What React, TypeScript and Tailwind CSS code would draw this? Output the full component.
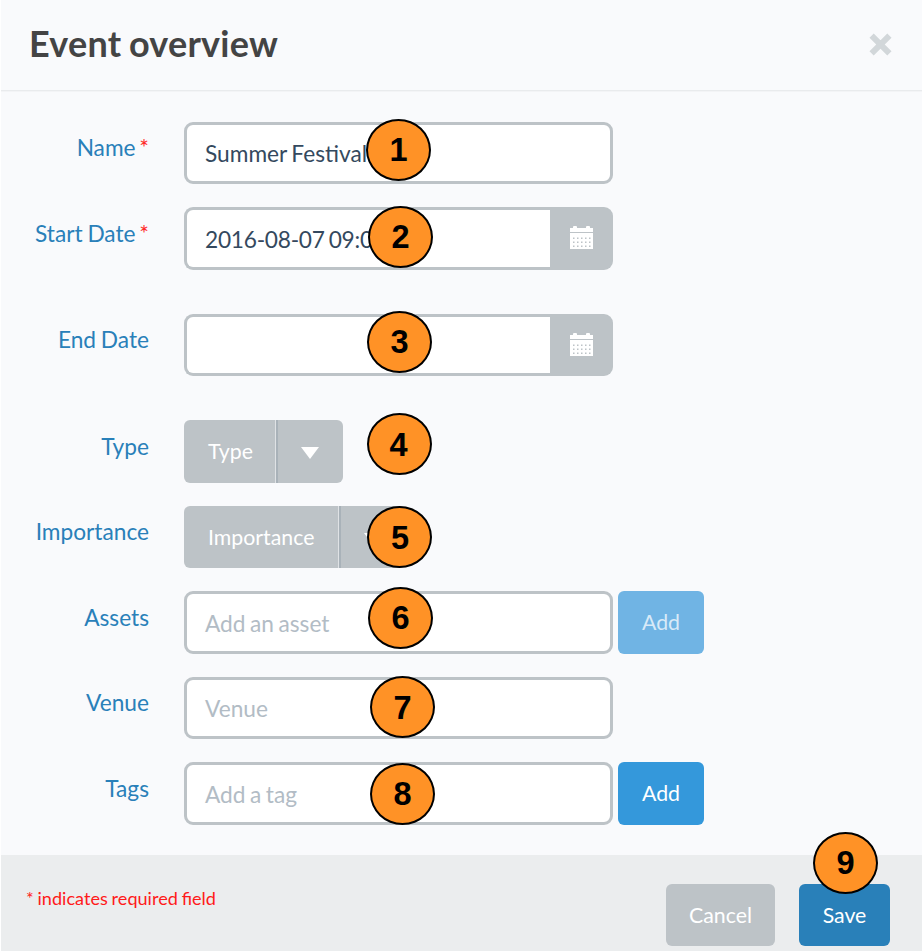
import type { ReactNode } from "react";

function Marker({ n, place, nudge = "" }: { n: number; place: string; nudge?: string }) {
  return (
    <div
      className={`absolute flex h-[62px] w-[65px] items-center justify-center rounded-[50%] border-2 border-black bg-[#ff9226] ${place}`}
    >
      <span className={`font-['Liberation_Sans',Arial,sans-serif] text-[32.5px] leading-none font-bold text-black ${nudge}`}>
        {n}
      </span>
    </div>
  );
}

function Row({
  label,
  required = false,
  box,
  drop = "pt-[9px]",
  children,
}: {
  label: string;
  required?: boolean;
  box: string;
  drop?: string;
  children: ReactNode;
}) {
  return (
    <div className={`flex shrink-0 ${box}`}>
      <div
        className={`mr-[35px] w-[149px] shrink-0 text-right text-[22.7px] leading-[34px] [word-spacing:-1px] whitespace-nowrap text-[#2980b9] ${drop}`}
      >
        {label}
        {required && <span className="text-[#ff2a2a] [word-spacing:-2px]"> *</span>}
      </div>
      {children}
    </div>
  );
}

function Field({ value, placeholder, drop = "pt-[2px]" }: { value?: string; placeholder?: string; drop?: string }) {
  return (
    <div
      className={`flex h-full w-[429px] shrink-0 items-center rounded-[9px] border-3 border-[#bdc3c7] bg-white px-[18px] text-[22.7px] [word-spacing:-1.3px] whitespace-nowrap ${drop} ${value ? "text-[#34495e]" : "text-[#b2bcc5]"}`}
    >
      {value ?? placeholder}
    </div>
  );
}

function CalendarIcon() {
  const dots = [3, 7, 11, 15, 19];
  return (
    <svg width="23" height="23" viewBox="0 0 23 23" className="-mt-[2px] -ml-px">
      <path fill="#fff" d="M0 2h3V1q0-1 1-1h2q1 0 1 1v1h9V1q0-1 1-1h2q1 0 1 1v1h3v4H0zM0 7h23v16H0z" />
      {[12, 16, 20].map((y) =>
        dots.map((x) => <rect key={`${x}-${y}`} x={x} y={y - 0.5} width="1.5" height="1.5" fill="#bdc3c7" />),
      )}
    </svg>
  );
}

function DateField({ value }: { value?: string }) {
  return (
    <div className="flex h-full w-[429px] shrink-0">
      <div className="flex w-[366px] items-center rounded-l-[9px] border-3 border-r-0 border-[#bdc3c7] bg-white pt-[3px] pl-[18px] text-[22.7px] tracking-[-0.25px] [word-spacing:-1.5px] whitespace-nowrap text-[#34495e]">
        {value}
      </div>
      <div className="flex w-[63px] items-center justify-center rounded-r-[9px] bg-[#bdc3c7]">
        <CalendarIcon />
      </div>
    </div>
  );
}

function Dropdown({ text, width }: { text: string; width: string }) {
  return (
    <div className="flex h-full overflow-hidden rounded-md bg-[#bdc3c7] text-white">
      <div className={`flex items-center pt-px pl-[24px] text-[21.3px] ${width}`}>{text}</div>
      <div className="w-px bg-[#dfe2e5]" />
      <div className="flex w-[67px] items-center justify-center border-l-2 border-[#a9b2b9]">
        <svg width="18" height="12" viewBox="0 0 18 12" className="mt-[3px] -ml-px">
          <path d="M0 0h18L9 12z" fill="#fff" />
        </svg>
      </div>
    </div>
  );
}

function Button({ children, look }: { children: string; look: string }) {
  return (
    <div className={`flex shrink-0 items-center justify-center rounded-md text-[21.3px] ${look}`}>{children}</div>
  );
}

export default function App() {
  return (
    <div className="relative h-[951px] w-[922px] overflow-hidden bg-white pl-px font-[Lato,sans-serif]">
      <div className="flex h-full flex-col bg-[#f9fafc]">
        <header className="flex h-[91px] shrink-0 items-center justify-between border-b border-[#e9ebed] pr-[30px] pl-[28px] shadow-[0_1px_0_#f3f4f6]">
          <h1 className="-mt-[5px] text-[36px] leading-none font-bold tracking-[0.25px] [word-spacing:-1.5px] text-[#444]">
            Event overview
          </h1>
          <svg width="23" height="23" viewBox="0 0 23 23" className="-mt-px">
            <path d="M2.6 2.6l17.8 17.8M20.4 2.6L2.6 20.4" stroke="#d2d7da" strokeWidth="6" />
          </svg>
        </header>

        <main className="-ml-px flex h-[764px] shrink-0 flex-col pt-[31px]">
          <Row label="Name" required box="h-[62px] mb-[23px]">
            <Field value="Summer Festival" />
          </Row>
          <Row label="Start Date" required box="h-[63px] mb-[44px]" drop="pt-[10px]">
            <DateField value="2016-08-07 09:00" />
          </Row>
          <Row label="End Date" box="h-[62px] mb-[44px]">
            <DateField />
          </Row>
          <Row label="Type" box="h-[63px] mb-[23px]" drop="pt-[10px]">
            <Dropdown text="Type" width="w-[91px]" />
          </Row>
          <Row label="Importance" box="h-[62px] mb-[23px]">
            <Dropdown text="Importance" width="w-[154px]" />
          </Row>
          <Row label="Assets" box="h-[63px] mb-[23px]" drop="pt-[10px]">
            <Field placeholder="Add an asset" drop="pt-[3px]" />
            <Button look="ml-[5px] h-full w-[86px] bg-[#70b4e4] text-[#d8eaf8]">Add</Button>
          </Row>
          <Row label="Venue" box="h-[62px] mb-[23px]">
            <Field placeholder="Venue" />
          </Row>
          <Row label="Tags" box="h-[63px]" drop="pt-[10px]">
            <Field placeholder="Add a tag" drop="pt-[3px]" />
            <Button look="ml-[5px] h-full w-[86px] bg-[#3498db] text-white">Add</Button>
          </Row>
        </main>

        <footer className="flex grow items-start bg-[#ebedee] pt-[29px] pr-[32px] pl-[25px]">
          <p className="mt-px grow text-[18.1px] leading-[27px] [word-spacing:-0.8px] text-[#ff1a1a]">
            * indicates required field
          </p>
          <Button look="h-[62px] w-[109px] bg-[#bdc3c7] pt-px text-white">Cancel</Button>
          <Button look="ml-[24px] h-[62px] w-[91px] bg-[#2980b9] pt-px text-white">Save</Button>
        </footer>
      </div>

      <Marker n={1} place="left-[366px] top-[119px]" />
      <Marker n={2} place="left-[368px] top-[206px]" />
      <Marker n={3} place="left-[367px] top-[311px]" />
      <Marker n={4} place="left-[367px] top-[413px]" nudge="mr-[2px] mt-[2px]" />
      <Marker n={5} place="left-[367px] top-[506px]" nudge="ml-px mt-[2px]" />
      <Marker n={6} place="left-[368px] top-[587px]" />
      <Marker n={7} place="left-[370px] top-[676px]" nudge="mt-[3px]" />
      <Marker n={8} place="left-[370px] top-[763px]" />
      <Marker n={9} place="left-[813px] top-[832px]" />
    </div>
  );
}
